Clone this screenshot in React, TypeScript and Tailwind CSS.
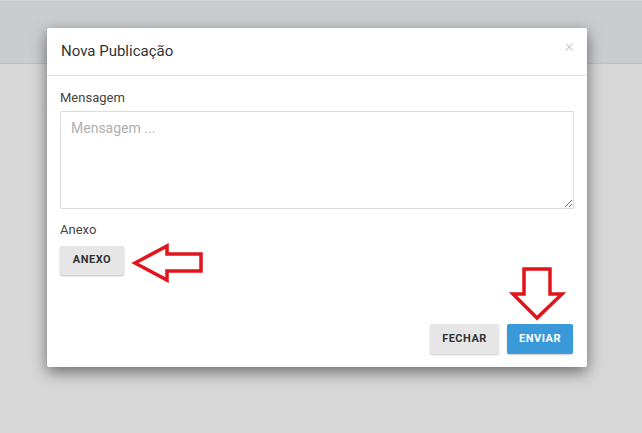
export default function App() {
  return (
    <div
      className="relative h-[433px] w-full overflow-hidden bg-[#d7d7d7]"
      style={{ fontFamily: "Roboto, 'Liberation Sans', sans-serif" }}
    >
      {/* page behind the modal */}
      <div className="h-[64px] border-t border-[#d3d4d8] border-b border-b-[#bfc0c4] bg-[#cbccd0]" />

      {/* modal */}
      <div className="absolute left-[47px] top-[28px] w-[540px] rounded-[2px] bg-white shadow-[0_5px_15px_rgba(0,0,0,0.5)]">
        <div className="relative flex h-[48px] items-center border-b border-[#e5e5e5] px-[14px]">
          <h4 className="text-[15px] text-[#333]">Nova Publicação</h4>
          <button className="absolute right-[13px] top-[9px] text-[18px] leading-none font-light text-[#c8c8c8]">
            ×
          </button>
        </div>

        <div className="px-[13px] pt-[12px]">
          <label className="block text-[13px] leading-[20px] text-[#444]">Mensagem</label>
          <textarea
            placeholder="Mensagem ..."
            className="mt-[3px] block h-[98px] w-full rounded-[1px] border border-[#dcdcdc] px-[10px] py-[6px] text-[14px] text-[#444] placeholder:text-[#b0b0b0] outline-none"
          />

          <label className="mt-[11px] block text-[13px] leading-[20px] text-[#444]">Anexo</label>
          <button className="mt-[6px] h-[29px] w-[64px] rounded-[2px] bg-[#e6e6e6] text-[11px] font-bold tracking-[0.5px] text-[#333] shadow-[0_1px_2px_rgba(0,0,0,0.25)]">
            ANEXO
          </button>
        </div>

        <div className="flex justify-end gap-[8px] px-[14px] pt-[49px] pb-[13px]">
          <button className="h-[30px] w-[69px] rounded-[2px] bg-[#e6e6e6] text-[11px] font-bold tracking-[0.5px] text-[#333] shadow-[0_1px_2px_rgba(0,0,0,0.2)]">
            FECHAR
          </button>
          <button className="h-[30px] w-[66px] rounded-[2px] bg-[#3a9ad9] text-[11px] font-bold tracking-[0.5px] text-white shadow-[0_1px_2px_rgba(0,0,0,0.2)]">
            ENVIAR
          </button>
        </div>
      </div>

      {/* annotation arrows */}
      <svg className="absolute left-[130px] top-[241px]" width="76" height="44" viewBox="0 0 76 44">
        <polygon
          points="5,22 37,5 37,13 71,13 71,30 37,30 37,39"
          fill="none"
          stroke="#e1141c"
          strokeWidth="3.5"
          strokeLinejoin="miter"
        />
      </svg>
      <svg className="absolute left-[509px] top-[264px]" width="58" height="60" viewBox="0 0 58 60">
        <polygon
          points="15,5 41,5 41,30 53,30 28,54 4,30 15,30"
          fill="none"
          stroke="#e1141c"
          strokeWidth="3.5"
          strokeLinejoin="miter"
        />
      </svg>
    </div>
  );
}
